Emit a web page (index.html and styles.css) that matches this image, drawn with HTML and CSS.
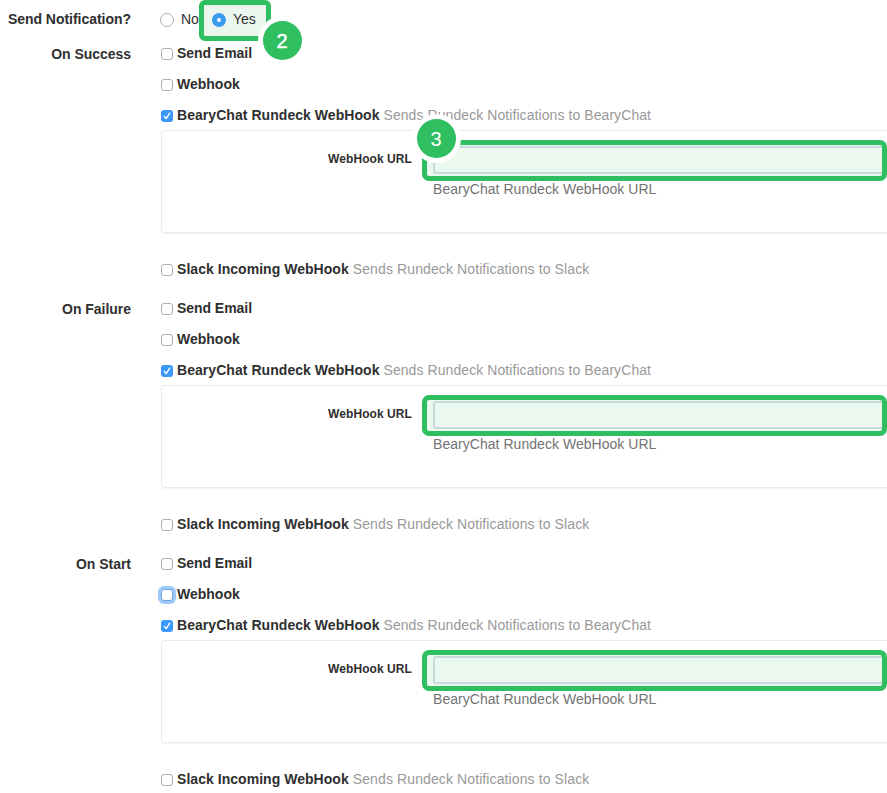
FILE: index.html
```html
<!DOCTYPE html>
<html lang="en">
<head>
<meta charset="utf-8">
<title>Notifications</title>
<link rel="stylesheet" href="styles.css">
</head>
<body>
<form class="form">
  <div class="row toggle">
    <div class="label">Send Notification?</div>
    <div class="choices">
      <span class="radio"></span><span class="choice no">No</span>
      <span class="yes-option"><span class="radio on"></span><span class="choice">Yes</span><span class="badge two">2</span></span>
    </div>
  </div>

  <section class="row event">
    <div class="label">On Success</div>
    <div class="options">
      <div class="option"><span class="check"></span><b class="email">Send Email</b></div>
      <div class="option"><span class="check"></span><b class="hook">Webhook</b></div>
      <div class="option last"><span class="check on"><svg viewBox="0 0 12 12"><path d="M3.3 6.4 5.2 8.6 8.7 3.2"/></svg></span><b class="beary">BearyChat Rundeck WebHook</b><span class="desc beary-desc">Sends Rundeck Notifications to BearyChat</span></div>
      <div class="panel">
        <div class="url-label">WebHook URL</div>
        <div class="field"><div class="input"></div><div class="marker"><span class="badge three">3</span></div><div class="help">BearyChat Rundeck WebHook URL</div></div>
      </div>
      <div class="option slack-row"><span class="check"></span><b class="slack">Slack Incoming WebHook</b><span class="desc slack-desc">Sends Rundeck Notifications to Slack</span></div>
    </div>
  </section>

  <section class="row event">
    <div class="label">On Failure</div>
    <div class="options">
      <div class="option"><span class="check"></span><b class="email">Send Email</b></div>
      <div class="option"><span class="check"></span><b class="hook">Webhook</b></div>
      <div class="option last"><span class="check on"><svg viewBox="0 0 12 12"><path d="M3.3 6.4 5.2 8.6 8.7 3.2"/></svg></span><b class="beary">BearyChat Rundeck WebHook</b><span class="desc beary-desc">Sends Rundeck Notifications to BearyChat</span></div>
      <div class="panel">
        <div class="url-label">WebHook URL</div>
        <div class="field"><div class="input"></div><div class="marker"></div><div class="help">BearyChat Rundeck WebHook URL</div></div>
      </div>
      <div class="option slack-row"><span class="check"></span><b class="slack">Slack Incoming WebHook</b><span class="desc slack-desc">Sends Rundeck Notifications to Slack</span></div>
    </div>
  </section>

  <section class="row event">
    <div class="label">On Start</div>
    <div class="options">
      <div class="option"><span class="check"></span><b class="email">Send Email</b></div>
      <div class="option"><span class="check focus"></span><b class="hook">Webhook</b></div>
      <div class="option last"><span class="check on"><svg viewBox="0 0 12 12"><path d="M3.3 6.4 5.2 8.6 8.7 3.2"/></svg></span><b class="beary">BearyChat Rundeck WebHook</b><span class="desc beary-desc">Sends Rundeck Notifications to BearyChat</span></div>
      <div class="panel">
        <div class="url-label">WebHook URL</div>
        <div class="field"><div class="input"></div><div class="marker"></div><div class="help">BearyChat Rundeck WebHook URL</div></div>
      </div>
      <div class="option slack-row"><span class="check"></span><b class="slack">Slack Incoming WebHook</b><span class="desc slack-desc">Sends Rundeck Notifications to Slack</span></div>
    </div>
  </section>
</form>
</body>
</html>
```
FILE: styles.css
```css
* { box-sizing: border-box; }
body {
  margin: 0;
  height: 793px;
  overflow: hidden;
  background: #fff;
  color: #2f2f2f;
  font: 14px/20px "Liberation Sans", Arial, sans-serif;
  white-space: nowrap;
}
.row { display: grid; grid-template-columns: 131px 726px; column-gap: 30px; }
.toggle { height: 38px; }
.label { padding-top: 6px; text-align: right; font-weight: bold; letter-spacing: -.03px; }
.toggle .label { padding-top: 9px; }
.event { height: 255px; }
.choices { display: flex; align-items: flex-start; }
.radio {
  flex: none;
  width: 14px;
  height: 14px;
  margin: 13px 0 0 -1px;
  border: 1px solid #b0b0b0;
  border-radius: 50%;
  background: #fff;
}
.choice { margin: 9px 0 0 7px; }
.no { width: 18px; }
.yes-option {
  position: relative;
  display: flex;
  width: 72px;
  height: 41px;
  border: 5px solid #2fbf61;
  border-radius: 6px;
  background: #eaf7ef;
}
.yes-option .radio { margin: 8px 0 0 8px; }
.yes-option .choice { margin: 4px 0 0 7px; }
.radio.on { border: 0; background: radial-gradient(circle, #e4f5f5 0 1.6px, #3a9bee 2.5px); }
.option { display: flex; height: 31px; padding-top: 5px; }
.option.last { height: 30px; }
.check {
  flex: none;
  width: 12px;
  height: 12px;
  margin: 5px 4px 0 0;
  border: 1px solid #b0b0b0;
  border-radius: 3px;
  background: #fff;
}
.check.on { border: 0; background: #3b99fc; }
.check svg { display: block; fill: none; stroke: #fff; stroke-width: 1.4; stroke-linecap: round; stroke-linejoin: round; }
.check.focus { border-color: #6fa5dc; box-shadow: 0 0 0 3px #9dcaf9; }
.email { letter-spacing: -.05px; }
.beary { letter-spacing: .05px; }
.slack { letter-spacing: .04px; }
.desc { margin-left: 4px; color: #999; }
.beary-desc { letter-spacing: .075px; }
.slack-desc { letter-spacing: .11px; }
.panel {
  display: grid;
  grid-template-columns: 250px 1fr;
  column-gap: 21px;
  height: 103px;
  border: 1px solid #ebebeb;
  border-right: 0;
  border-radius: 4px 0 0 4px;
  box-shadow: 0 1px 1px rgba(0, 0, 0, .05);
}
.url-label { padding-top: 18px; text-align: right; font-size: 12px; font-weight: bold; letter-spacing: .07px; }
.field { position: relative; padding-top: 15px; }
.input { height: 28px; border: 2px solid #d9dfe8; border-right: 0; border-radius: 3px 0 0 3px; background: #fff; }
.marker {
  position: absolute;
  top: 9px;
  left: -11px;
  width: 465px;
  height: 41px;
  border: 5px solid #2fbf61;
  border-radius: 7px;
  background: rgba(47, 191, 97, .1);
}
.help { margin-top: 5px; color: #737373; letter-spacing: .04px; }
.slack-row { margin-top: 21px; }
.badge {
  position: absolute;
  width: 39px;
  height: 39px;
  border-radius: 50%;
  background: #2fbf61;
  box-shadow: 0 0 0 5px #fff;
  color: #fff;
  font-size: 20px;
  line-height: 40px;
  text-align: center;
}
.badge.two { left: 58.5px; top: 16.3px; z-index: 2; -webkit-text-stroke: .4px #fff; }
.badge.three { left: -10.5px; top: -26.5px; }
```
